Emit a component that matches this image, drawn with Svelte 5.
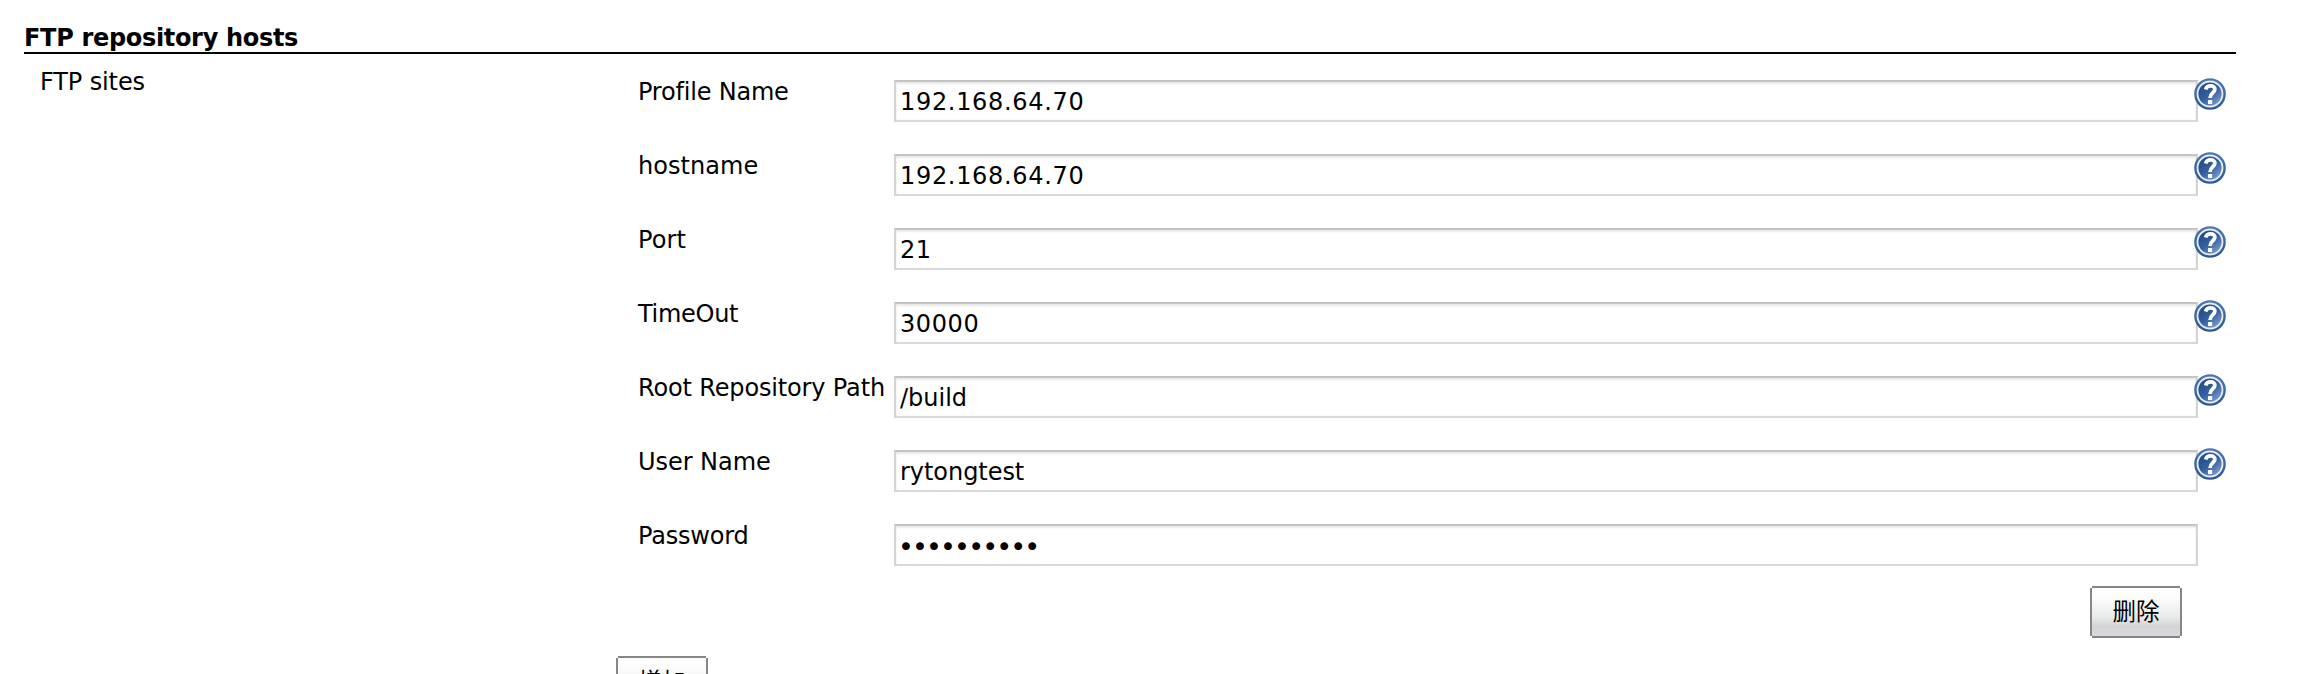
<script>
  const fields = [
    { id: 'profile', label: 'Profile Name', value: '192.168.64.70', ls: -0.2, vs: 0.68, help: true },
    { id: 'hostname', label: 'hostname', value: '192.168.64.70', ls: 0.05, vs: 0.68, help: true },
    { id: 'port', label: 'Port', value: '21', ls: 0.1, vs: 0.5, help: true },
    { id: 'timeout', label: 'TimeOut', value: '30000', ls: -0.3, vs: 0.6, help: true },
    { id: 'root', label: 'Root Repository Path', value: '/build', ls: -0.15, vs: 0, help: true },
    { id: 'user', label: 'User Name', value: 'rytongtest', ls: -0.05, vs: -0.05, help: true },
    { id: 'password', label: 'Password', value: '0123456789', ls: -0.2, vs: -1.9, type: 'password' }
  ];
</script>

<main>
  <h2>FTP repository hosts</h2>
  <div class="section">
    <div class="name">FTP sites</div>
    <div class="hosts">
      <div class="form">
        {#each fields as f}
          <div class="row">
            <label for={f.id} style="letter-spacing:{f.ls}px">{f.label}</label>
            <input id={f.id} type={f.type ?? 'text'} value={f.value} style="letter-spacing:{f.vs}px" />
            {#if f.help}
              <svg class="help" viewBox="0 0 32 32" aria-hidden="true">
                <defs>
                  <linearGradient id="ring-{f.id}" x1="0" y1="0" x2="0" y2="1">
                    <stop offset="0" stop-color="#4d78b0" />
                    <stop offset="1" stop-color="#2c568f" />
                  </linearGradient>
                  <linearGradient id="disc-{f.id}" x1="0.15" y1="0.1" x2="0.85" y2="0.95">
                    <stop offset="0" stop-color="#234a88" />
                    <stop offset="0.5" stop-color="#35609f" />
                    <stop offset="1" stop-color="#7c9dcb" />
                  </linearGradient>
                </defs>
                <circle cx="16" cy="16" r="15.8" fill="url(#ring-{f.id})" />
                <circle cx="16" cy="16" r="13.4" fill="#e6edf7" />
                <circle cx="16" cy="16" r="11.6" fill="url(#disc-{f.id})" />
                <path d="M11.6 11.4C12.3 8.9 14.1 7.9 16.5 7.9C19.3 7.9 21 9.3 20.9 11.4C20.7 14.6 16.1 14.8 16 20" fill="none" stroke="#fff" stroke-width="3.7" />
                <rect x="14" y="22" width="4.2" height="4" rx="0.6" fill="#fff" />
              </svg>
            {/if}
          </div>
        {/each}
        <div class="actions"><button type="button">删除</button></div>
      </div>
      <button type="button">增加</button>
    </div>
  </div>
</main>

<style>
  :global(body) {
    background: #fff;
    overflow: hidden;
  }
  main {
    box-sizing: border-box;
    width: 2236px;
    height: 674px;
    overflow: hidden;
    padding: 24px 0 0 24px;
    font: 24px/28px "DejaVu Sans", "Noto Sans CJK SC", sans-serif;
    color: #000;
  }
  h2 {
    margin: 0;
    font-size: 24px;
    line-height: 28px;
    letter-spacing: -0.32px;
    border-bottom: 2px solid #000;
  }
  .section {
    display: flex;
    padding-top: 14px;
  }
  .name {
    box-sizing: border-box;
    flex: none;
    width: 592px;
    padding-left: 16px;
    letter-spacing: -0.12px;
  }
  .hosts {
    flex: none;
  }
  .form {
    width: 1582px;
    margin-bottom: 18px;
  }
  .row {
    display: flex;
    align-items: flex-start;
    height: 74px;
    padding-left: 22px;
  }
  label {
    flex: none;
    width: 256px;
    padding-top: 10px;
    white-space: nowrap;
  }
  input {
    box-sizing: border-box;
    flex: none;
    width: 1304px;
    height: 42px;
    margin: 12px 0 0;
    padding: 2px 4px 0;
    border: 2px solid;
    border-color: #c3c3c3 #d4d4d4 #d9d9d9;
    border-radius: 0;
    background: #fff;
    box-shadow: inset 0 2px 2px #e9e9e9, inset 0 0 2px #eee;
    font: inherit;
    color: #000;
    outline: none;
  }
  input[type="password"] {
    font-size: 27px;
    padding: 3px 2px 0;
  }
  .help {
    position: relative;
    flex: none;
    width: 32px;
    height: 32px;
    margin: 10px 0 0 -4px;
  }
  .actions {
    display: flex;
    justify-content: flex-end;
    padding-right: 16px;
  }
  button {
    display: block;
    box-sizing: border-box;
    width: 92px;
    height: 52px;
    margin: 0;
    padding: 0 0 4px;
    border: 2px solid #868686;
    border-radius: 0;
    background: linear-gradient(#fff 0%, #fbfbfb 25%, #e9eaea 60%, #d5d5d7 80%, #d8d8da 100%);
    clip-path: polygon(2px 0, 90px 0, 90px 2px, 92px 2px, 92px 50px, 90px 50px, 90px 52px, 2px 52px, 2px 50px, 0 50px, 0 2px, 2px 2px);
    font: 23.5px/28px "Noto Sans CJK SC", sans-serif;
    color: #000;
  }
</style>
